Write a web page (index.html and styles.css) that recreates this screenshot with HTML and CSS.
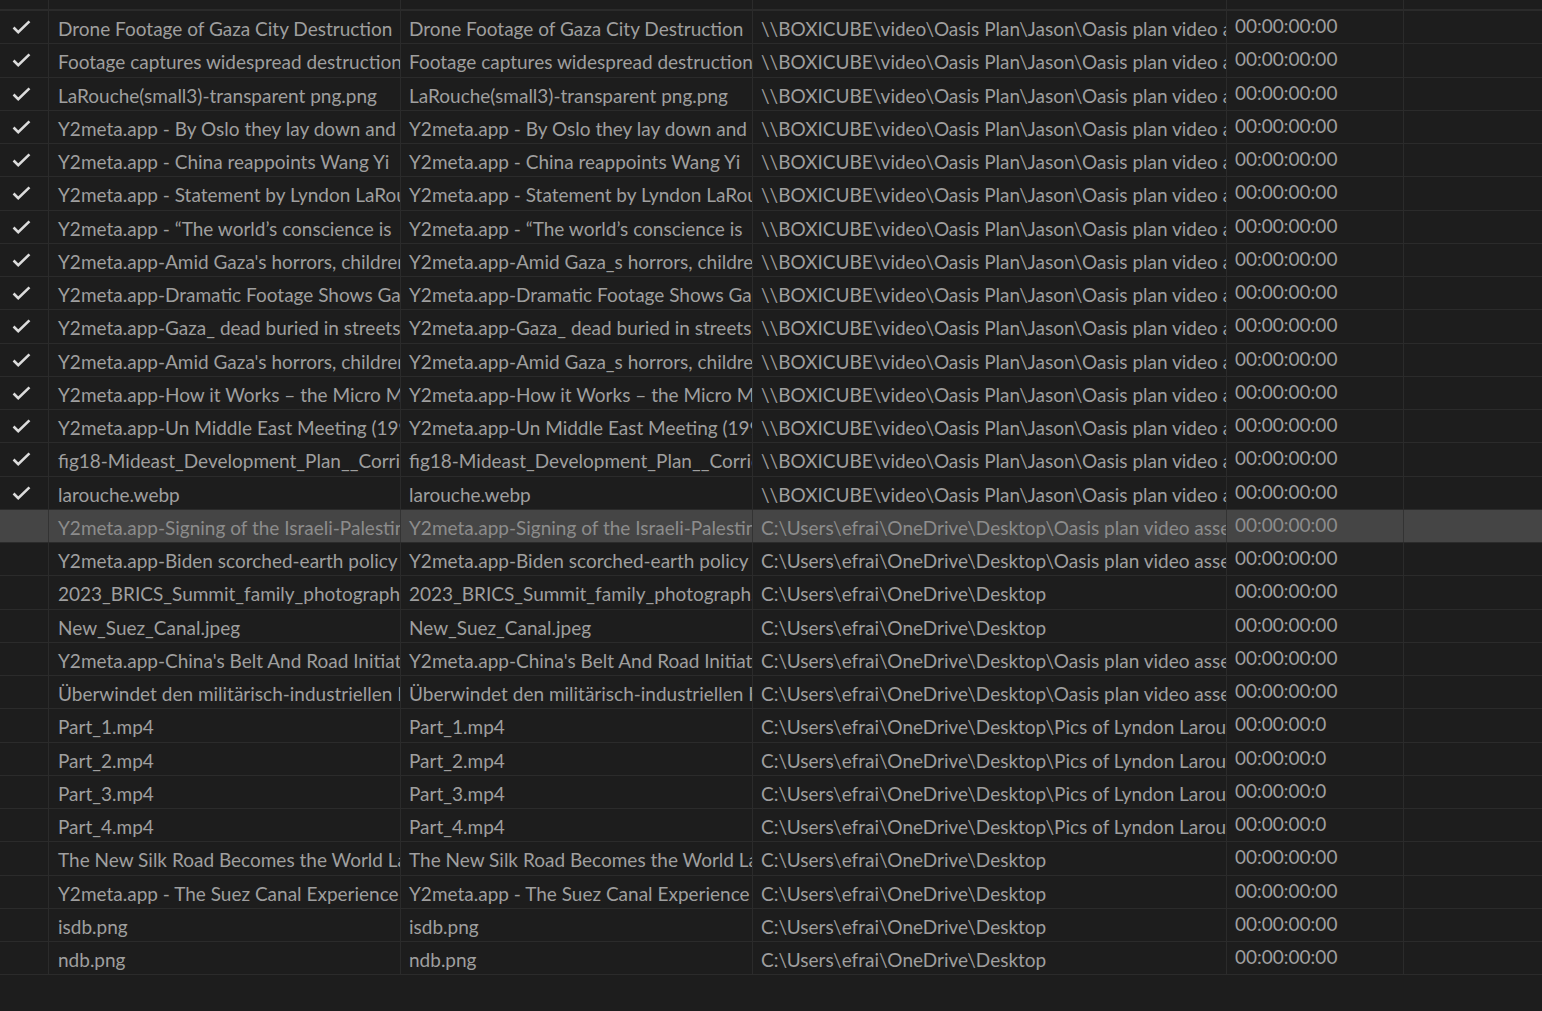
FILE: index.html
```html
<!DOCTYPE html>
<html lang="en">
  <head>
    <meta charset="UTF-8" />
    <meta name="viewport" content="width=device-width, initial-scale=1.0" />
    <title>Project Bin - List View</title>
    <link rel="stylesheet" href="styles.css">
  </head>
  <body>
    <div class="bin-list">
      <!-- column header, scrolled mostly out of view -->
      <div class="row header">
        <div class="cell"></div>
        <div class="cell"></div>
        <div class="cell"></div>
        <div class="cell"></div>
        <div class="cell"></div>
        <div class="cell last"></div>
      </div>

      <div class="row">
        <div class="cell cell-check"><svg class="check" viewBox="0 0 20 15"><polyline points="1.5,8 6.5,13 18.5,1.5" /></svg></div>
        <div class="cell cell-name first">Drone Footage of Gaza City Destruction</div>
        <div class="cell cell-name">Drone Footage of Gaza City Destruction</div>
        <div class="cell cell-path">\\BOXICUBE\video\Oasis Plan\Jason\Oasis plan video assets</div>
        <div class="cell cell-time">00:00:00:00</div>
        <div class="cell last"></div>
      </div>
      <div class="row">
        <div class="cell cell-check"><svg class="check" viewBox="0 0 20 15"><polyline points="1.5,8 6.5,13 18.5,1.5" /></svg></div>
        <div class="cell cell-name first">Footage captures widespread destruction in Gaza</div>
        <div class="cell cell-name">Footage captures widespread destruction in Gaza</div>
        <div class="cell cell-path">\\BOXICUBE\video\Oasis Plan\Jason\Oasis plan video assets</div>
        <div class="cell cell-time">00:00:00:00</div>
        <div class="cell last"></div>
      </div>
      <div class="row">
        <div class="cell cell-check"><svg class="check" viewBox="0 0 20 15"><polyline points="1.5,8 6.5,13 18.5,1.5" /></svg></div>
        <div class="cell cell-name first">LaRouche(small3)-transparent png.png</div>
        <div class="cell cell-name">LaRouche(small3)-transparent png.png</div>
        <div class="cell cell-path">\\BOXICUBE\video\Oasis Plan\Jason\Oasis plan video assets</div>
        <div class="cell cell-time">00:00:00:00</div>
        <div class="cell last"></div>
      </div>
      <div class="row">
        <div class="cell cell-check"><svg class="check" viewBox="0 0 20 15"><polyline points="1.5,8 6.5,13 18.5,1.5" /></svg></div>
        <div class="cell cell-name first">Y2meta.app - By Oslo they lay down and died</div>
        <div class="cell cell-name">Y2meta.app - By Oslo they lay down and died</div>
        <div class="cell cell-path">\\BOXICUBE\video\Oasis Plan\Jason\Oasis plan video assets</div>
        <div class="cell cell-time">00:00:00:00</div>
        <div class="cell last"></div>
      </div>
      <div class="row">
        <div class="cell cell-check"><svg class="check" viewBox="0 0 20 15"><polyline points="1.5,8 6.5,13 18.5,1.5" /></svg></div>
        <div class="cell cell-name first">Y2meta.app - China reappoints Wang Yi</div>
        <div class="cell cell-name">Y2meta.app - China reappoints Wang Yi</div>
        <div class="cell cell-path">\\BOXICUBE\video\Oasis Plan\Jason\Oasis plan video assets</div>
        <div class="cell cell-time">00:00:00:00</div>
        <div class="cell last"></div>
      </div>
      <div class="row">
        <div class="cell cell-check"><svg class="check" viewBox="0 0 20 15"><polyline points="1.5,8 6.5,13 18.5,1.5" /></svg></div>
        <div class="cell cell-name first">Y2meta.app - Statement by Lyndon LaRouche</div>
        <div class="cell cell-name">Y2meta.app - Statement by Lyndon LaRouche</div>
        <div class="cell cell-path">\\BOXICUBE\video\Oasis Plan\Jason\Oasis plan video assets</div>
        <div class="cell cell-time">00:00:00:00</div>
        <div class="cell last"></div>
      </div>
      <div class="row">
        <div class="cell cell-check"><svg class="check" viewBox="0 0 20 15"><polyline points="1.5,8 6.5,13 18.5,1.5" /></svg></div>
        <div class="cell cell-name first">Y2meta.app - “The world’s conscience is</div>
        <div class="cell cell-name">Y2meta.app - “The world’s conscience is</div>
        <div class="cell cell-path">\\BOXICUBE\video\Oasis Plan\Jason\Oasis plan video assets</div>
        <div class="cell cell-time">00:00:00:00</div>
        <div class="cell last"></div>
      </div>
      <div class="row">
        <div class="cell cell-check"><svg class="check" viewBox="0 0 20 15"><polyline points="1.5,8 6.5,13 18.5,1.5" /></svg></div>
        <div class="cell cell-name first">Y2meta.app-Amid Gaza's horrors, children</div>
        <div class="cell cell-name">Y2meta.app-Amid Gaza_s horrors, children</div>
        <div class="cell cell-path">\\BOXICUBE\video\Oasis Plan\Jason\Oasis plan video assets</div>
        <div class="cell cell-time">00:00:00:00</div>
        <div class="cell last"></div>
      </div>
      <div class="row">
        <div class="cell cell-check"><svg class="check" viewBox="0 0 20 15"><polyline points="1.5,8 6.5,13 18.5,1.5" /></svg></div>
        <div class="cell cell-name first">Y2meta.app-Dramatic Footage Shows Gaza</div>
        <div class="cell cell-name">Y2meta.app-Dramatic Footage Shows Gaza</div>
        <div class="cell cell-path">\\BOXICUBE\video\Oasis Plan\Jason\Oasis plan video assets</div>
        <div class="cell cell-time">00:00:00:00</div>
        <div class="cell last"></div>
      </div>
      <div class="row">
        <div class="cell cell-check"><svg class="check" viewBox="0 0 20 15"><polyline points="1.5,8 6.5,13 18.5,1.5" /></svg></div>
        <div class="cell cell-name first">Y2meta.app-Gaza_ dead buried in streets</div>
        <div class="cell cell-name">Y2meta.app-Gaza_ dead buried in streets</div>
        <div class="cell cell-path">\\BOXICUBE\video\Oasis Plan\Jason\Oasis plan video assets</div>
        <div class="cell cell-time">00:00:00:00</div>
        <div class="cell last"></div>
      </div>
      <div class="row">
        <div class="cell cell-check"><svg class="check" viewBox="0 0 20 15"><polyline points="1.5,8 6.5,13 18.5,1.5" /></svg></div>
        <div class="cell cell-name first">Y2meta.app-Amid Gaza's horrors, children</div>
        <div class="cell cell-name">Y2meta.app-Amid Gaza_s horrors, children</div>
        <div class="cell cell-path">\\BOXICUBE\video\Oasis Plan\Jason\Oasis plan video assets</div>
        <div class="cell cell-time">00:00:00:00</div>
        <div class="cell last"></div>
      </div>
      <div class="row">
        <div class="cell cell-check"><svg class="check" viewBox="0 0 20 15"><polyline points="1.5,8 6.5,13 18.5,1.5" /></svg></div>
        <div class="cell cell-name first">Y2meta.app-How it Works – the Micro Mobility</div>
        <div class="cell cell-name">Y2meta.app-How it Works – the Micro Mobility</div>
        <div class="cell cell-path">\\BOXICUBE\video\Oasis Plan\Jason\Oasis plan video assets</div>
        <div class="cell cell-time">00:00:00:00</div>
        <div class="cell last"></div>
      </div>
      <div class="row">
        <div class="cell cell-check"><svg class="check" viewBox="0 0 20 15"><polyline points="1.5,8 6.5,13 18.5,1.5" /></svg></div>
        <div class="cell cell-name first">Y2meta.app-Un Middle East Meeting (1995)</div>
        <div class="cell cell-name">Y2meta.app-Un Middle East Meeting (1995)</div>
        <div class="cell cell-path">\\BOXICUBE\video\Oasis Plan\Jason\Oasis plan video assets</div>
        <div class="cell cell-time">00:00:00:00</div>
        <div class="cell last"></div>
      </div>
      <div class="row">
        <div class="cell cell-check"><svg class="check" viewBox="0 0 20 15"><polyline points="1.5,8 6.5,13 18.5,1.5" /></svg></div>
        <div class="cell cell-name first">fig18-Mideast_Development_Plan__Corridors</div>
        <div class="cell cell-name">fig18-Mideast_Development_Plan__Corridors</div>
        <div class="cell cell-path">\\BOXICUBE\video\Oasis Plan\Jason\Oasis plan video assets</div>
        <div class="cell cell-time">00:00:00:00</div>
        <div class="cell last"></div>
      </div>
      <div class="row">
        <div class="cell cell-check"><svg class="check" viewBox="0 0 20 15"><polyline points="1.5,8 6.5,13 18.5,1.5" /></svg></div>
        <div class="cell cell-name first">larouche.webp</div>
        <div class="cell cell-name">larouche.webp</div>
        <div class="cell cell-path">\\BOXICUBE\video\Oasis Plan\Jason\Oasis plan video assets</div>
        <div class="cell cell-time">00:00:00:00</div>
        <div class="cell last"></div>
      </div>

      <!-- offline clips, not yet relinked -->
      <div class="row selected">
        <div class="cell cell-check"></div>
        <div class="cell cell-name first">Y2meta.app-Signing of the Israeli-Palestinian</div>
        <div class="cell cell-name">Y2meta.app-Signing of the Israeli-Palestinian</div>
        <div class="cell cell-path">C:\Users\efrai\OneDrive\Desktop\Oasis plan video assets</div>
        <div class="cell cell-time">00:00:00:00</div>
        <div class="cell last"></div>
      </div>
      <div class="row">
        <div class="cell cell-check"></div>
        <div class="cell cell-name first">Y2meta.app-Biden scorched-earth policy</div>
        <div class="cell cell-name">Y2meta.app-Biden scorched-earth policy</div>
        <div class="cell cell-path">C:\Users\efrai\OneDrive\Desktop\Oasis plan video assets</div>
        <div class="cell cell-time">00:00:00:00</div>
        <div class="cell last"></div>
      </div>
      <div class="row">
        <div class="cell cell-check"></div>
        <div class="cell cell-name first">2023_BRICS_Summit_family_photograph.jpg</div>
        <div class="cell cell-name">2023_BRICS_Summit_family_photograph.jpg</div>
        <div class="cell cell-path">C:\Users\efrai\OneDrive\Desktop</div>
        <div class="cell cell-time">00:00:00:00</div>
        <div class="cell last"></div>
      </div>
      <div class="row">
        <div class="cell cell-check"></div>
        <div class="cell cell-name first">New_Suez_Canal.jpeg</div>
        <div class="cell cell-name">New_Suez_Canal.jpeg</div>
        <div class="cell cell-path">C:\Users\efrai\OneDrive\Desktop</div>
        <div class="cell cell-time">00:00:00:00</div>
        <div class="cell last"></div>
      </div>
      <div class="row">
        <div class="cell cell-check"></div>
        <div class="cell cell-name first">Y2meta.app-China's Belt And Road Initiative</div>
        <div class="cell cell-name">Y2meta.app-China's Belt And Road Initiative</div>
        <div class="cell cell-path">C:\Users\efrai\OneDrive\Desktop\Oasis plan video assets</div>
        <div class="cell cell-time">00:00:00:00</div>
        <div class="cell last"></div>
      </div>
      <div class="row">
        <div class="cell cell-check"></div>
        <div class="cell cell-name first">Überwindet den militärisch-industriellen Komplex</div>
        <div class="cell cell-name">Überwindet den militärisch-industriellen Komplex</div>
        <div class="cell cell-path">C:\Users\efrai\OneDrive\Desktop\Oasis plan video assets</div>
        <div class="cell cell-time">00:00:00:00</div>
        <div class="cell last"></div>
      </div>
      <div class="row">
        <div class="cell cell-check"></div>
        <div class="cell cell-name first">Part_1.mp4</div>
        <div class="cell cell-name">Part_1.mp4</div>
        <div class="cell cell-path">C:\Users\efrai\OneDrive\Desktop\Pics of Lyndon Larouche</div>
        <div class="cell cell-time">00:00:00:0</div>
        <div class="cell last"></div>
      </div>
      <div class="row">
        <div class="cell cell-check"></div>
        <div class="cell cell-name first">Part_2.mp4</div>
        <div class="cell cell-name">Part_2.mp4</div>
        <div class="cell cell-path">C:\Users\efrai\OneDrive\Desktop\Pics of Lyndon Larouche</div>
        <div class="cell cell-time">00:00:00:0</div>
        <div class="cell last"></div>
      </div>
      <div class="row">
        <div class="cell cell-check"></div>
        <div class="cell cell-name first">Part_3.mp4</div>
        <div class="cell cell-name">Part_3.mp4</div>
        <div class="cell cell-path">C:\Users\efrai\OneDrive\Desktop\Pics of Lyndon Larouche</div>
        <div class="cell cell-time">00:00:00:0</div>
        <div class="cell last"></div>
      </div>
      <div class="row">
        <div class="cell cell-check"></div>
        <div class="cell cell-name first">Part_4.mp4</div>
        <div class="cell cell-name">Part_4.mp4</div>
        <div class="cell cell-path">C:\Users\efrai\OneDrive\Desktop\Pics of Lyndon Larouche</div>
        <div class="cell cell-time">00:00:00:0</div>
        <div class="cell last"></div>
      </div>
      <div class="row">
        <div class="cell cell-check"></div>
        <div class="cell cell-name first">The New Silk Road Becomes the World Land-Bridge</div>
        <div class="cell cell-name">The New Silk Road Becomes the World Land-Bridge</div>
        <div class="cell cell-path">C:\Users\efrai\OneDrive\Desktop</div>
        <div class="cell cell-time">00:00:00:00</div>
        <div class="cell last"></div>
      </div>
      <div class="row">
        <div class="cell cell-check"></div>
        <div class="cell cell-name first">Y2meta.app - The Suez Canal Experience</div>
        <div class="cell cell-name">Y2meta.app - The Suez Canal Experience</div>
        <div class="cell cell-path">C:\Users\efrai\OneDrive\Desktop</div>
        <div class="cell cell-time">00:00:00:00</div>
        <div class="cell last"></div>
      </div>
      <div class="row">
        <div class="cell cell-check"></div>
        <div class="cell cell-name first">isdb.png</div>
        <div class="cell cell-name">isdb.png</div>
        <div class="cell cell-path">C:\Users\efrai\OneDrive\Desktop</div>
        <div class="cell cell-time">00:00:00:00</div>
        <div class="cell last"></div>
      </div>
      <div class="row">
        <div class="cell cell-check"></div>
        <div class="cell cell-name first">ndb.png</div>
        <div class="cell cell-name">ndb.png</div>
        <div class="cell cell-path">C:\Users\efrai\OneDrive\Desktop</div>
        <div class="cell cell-time">00:00:00:00</div>
        <div class="cell last"></div>
      </div>
    </div>
  </body>
</html>
```

FILE: styles.css
```css
:root {
  --panel-bg: #1d1d1d;
  --grid-line: #2b2b2b;
  --text-color: #9f9f9f;
  --check-color: #dcdcdc;
  --selected-bg: #454545;
  --selected-text: #8c8c8c;
  --font-family: Lato, "Liberation Sans", sans-serif;
}

* {
  margin: 0;
  padding: 0;
  box-sizing: border-box;
}

body {
  font-family: var(--font-family);
  font-size: 19px;
  color: var(--text-color);
  background-color: var(--panel-bg);
  overflow: hidden;
}

.bin-list {
  width: 100%;
}

.row {
  display: grid;
  grid-template-columns: 49px 352px 352px 474px 177px 1fr;
  height: 33.25px;
  border-bottom: 1px solid var(--grid-line);
}

.row.header {
  height: 11px;
  border-bottom-width: 2px;
}

.cell {
  border-right: 1px solid var(--grid-line);
  overflow: hidden;
  white-space: nowrap;
  padding-left: 8px;
  padding-top: 3px;
  line-height: 29px;
}

.cell.last {
  border-right: none;
}

.cell-name.first {
  padding-left: 9px;
}

.cell-time {
  padding-top: 0;
}

.cell-check {
  padding: 0;
  display: flex;
  align-items: center;
  justify-content: center;
}

.check {
  width: 19px;
  height: 14px;
  margin-left: -6px;
  fill: none;
  stroke: var(--check-color);
  stroke-width: 2.8;
}

.row.selected {
  background-color: var(--selected-bg);
  color: var(--selected-text);
}

.row.selected .cell {
  border-color: #333;
}
```
